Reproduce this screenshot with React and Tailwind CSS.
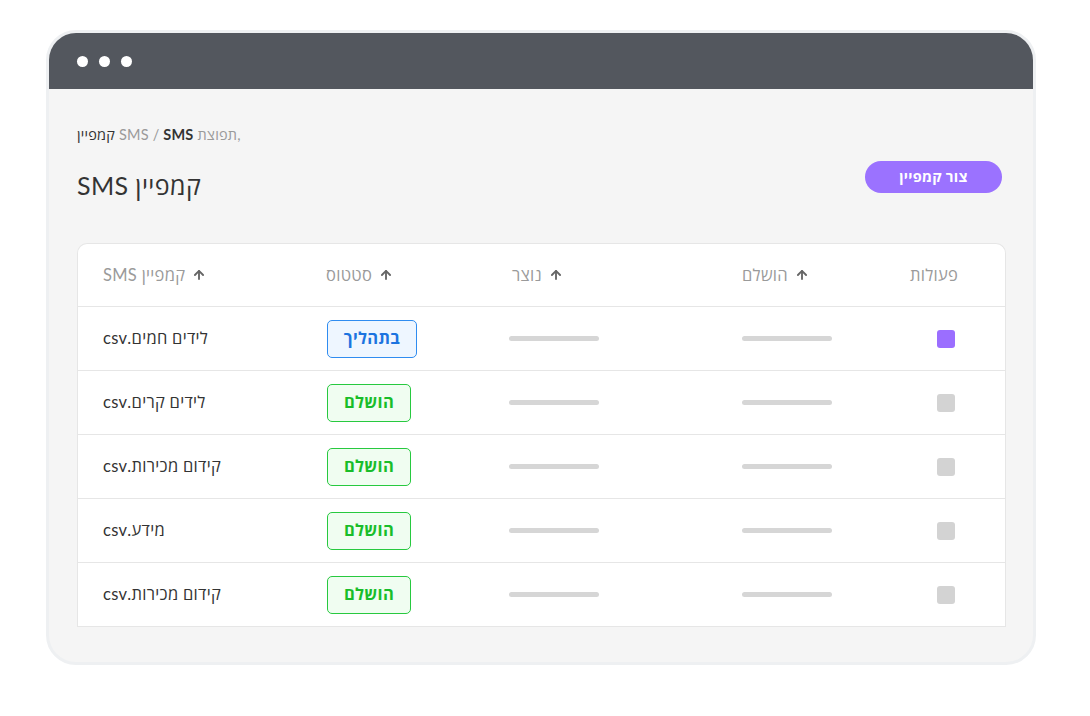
import { ArrowUp } from "lucide-react";

const rows = [
  { name: "לידים חמים.csv", status: "progress", active: true },
  { name: "לידים קרים.csv", status: "done" },
  { name: "קידום מכירות.csv", status: "done" },
  { name: "מידע.csv", status: "done" },
  { name: "קידום מכירות.csv", status: "done" },
];

const cols = "grid grid-cols-[223px_186px_230px_170px_1fr]";

function HeadCell({ children, arrow = true, className = "" }) {
  return (
    <div className={`flex items-center gap-[7px] text-[16.5px] tracking-[0.3px] text-[#9a9a9a] ${className}`}>
      <span dir="rtl">{children}</span>
      {arrow && <ArrowUp className="h-[14px] w-[14px] text-[#666]" strokeWidth={3.2} />}
    </div>
  );
}

function Badge({ status }) {
  if (status === "progress") {
    return (
      <span className="inline-flex h-[38px] w-[90px] items-center justify-center rounded-[5px] border border-[#2f8cf0] bg-[#eef6ff] text-[16.5px] font-bold tracking-[0.3px] text-[#1c74e0]">
        בתהליך
      </span>
    );
  }
  return (
    <span className="inline-flex h-[38px] w-[84px] items-center justify-center rounded-[5px] border border-[#27c93f] bg-[#f0fdf1] text-[16.5px] font-bold tracking-[0.3px] text-[#19bd2a]">
      הושלם
    </span>
  );
}

export default function App() {
  return (
    <div className="min-h-[716px] bg-white pt-[30px] font-['Lato','Open_Sans','Noto_Sans',sans-serif]">
      <div className="ml-[46px] h-[635px] w-[990px] overflow-hidden rounded-[30px] border-[3px] border-[#eef0f2] bg-[#f5f5f5]">
        <div className="flex h-[56px] items-center gap-[11px] bg-[#53575e] pl-[28px]">
          <span className="h-[11px] w-[11px] rounded-full bg-white" />
          <span className="h-[11px] w-[11px] rounded-full bg-white" />
          <span className="h-[11px] w-[11px] rounded-full bg-white" />
        </div>

        <div className="px-[28px] pt-[37px]">
          <div className="text-[14.5px] leading-[18px] tracking-[0.2px] text-[#9a9a9a]">
            <span className="text-[#333]">קמפיין</span> SMS / <span className="font-bold text-[#333]">SMS</span> תפוצת,
          </div>

          <div className="mt-[17px] flex items-start justify-between">
            <h1 dir="rtl" className="mt-[8px] text-[25px] leading-[32px] tracking-[0.4px] text-[#333]">
              קמפיין SMS
            </h1>
            <button className="mr-[3px] h-[32px] w-[137px] rounded-full bg-[#9b72ff] text-[14.5px] font-bold tracking-[0.3px] text-white">
              צור קמפיין
            </button>
          </div>

          <div className="mt-[42px] w-[929px] overflow-hidden rounded-t-[10px] border border-b-0 border-[#e6e6e6] bg-white">
            <div className={`${cols} h-[63px] items-center border-b border-[#e6e6e6]`}>
              <HeadCell className="pl-[25px]">קמפיין SMS</HeadCell>
              <HeadCell className="pl-[25px]">סטטוס</HeadCell>
              <HeadCell className="pl-[25px]">נוצר</HeadCell>
              <HeadCell className="pl-[25px]">הושלם</HeadCell>
              <HeadCell arrow={false} className="pl-[23px]">פעולות</HeadCell>
            </div>
            {rows.map((r, i) => (
              <div key={i} className={`${cols} h-[64px] items-center border-b border-[#e6e6e6]`}>
                <div className="pl-[25px] text-[16.5px] tracking-[0.3px] text-[#333]">
                  <span dir="rtl">{r.name}</span>
                </div>
                <div className="pl-[26px]">
                  <Badge status={r.status} />
                </div>
                <div className="pl-[22px]">
                  <div className="h-[5px] w-[90px] rounded-full bg-[#d6d6d6]" />
                </div>
                <div className="pl-[25px]">
                  <div className="h-[5px] w-[90px] rounded-full bg-[#d6d6d6]" />
                </div>
                <div className="pl-[50px]">
                  <div className={`h-[18px] w-[18px] rounded-[3px] ${r.active ? "bg-[#9b6eff]" : "bg-[#d3d3d3]"}`} />
                </div>
              </div>
            ))}
          </div>
        </div>
      </div>
    </div>
  );
}
